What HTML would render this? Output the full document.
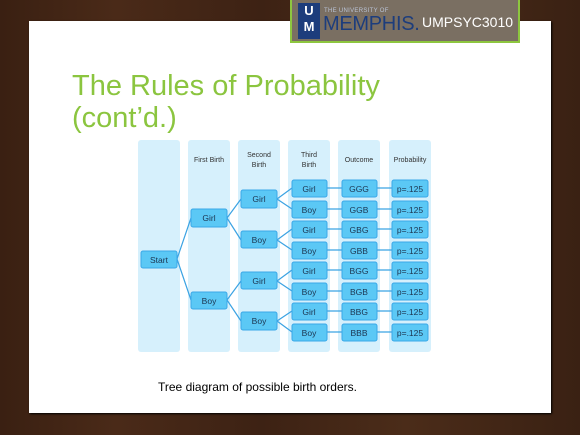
<!DOCTYPE html>
<html><head><meta charset="utf-8"><style>
html,body{margin:0;padding:0}
body{width:580px;height:435px;position:relative;overflow:hidden;background:linear-gradient(90deg,#3a2012 0%,#4a2a18 20%,#3d2214 45%,#4b2c19 70%,#3a2113 100%);font-family:"Liberation Sans",sans-serif}
.slide{position:absolute;left:29px;top:21px;width:522px;height:392px;background:#fff;box-shadow:1px 1px 2px #000}
.banner{position:absolute;left:290px;top:0;width:230px;height:43px;background:#7a6f62;border:2px solid #8dc63f;border-top:none;box-sizing:border-box}
.logo{position:absolute;left:6px;top:3px;width:22px;height:36px;background:#1d3d7c;color:#fff;font-size:13px;font-weight:bold;text-align:center;line-height:16px}
.uni{position:absolute;left:32px;top:8px;font-size:6px;color:#b9c3d6;letter-spacing:.3px}
.mem{position:absolute;left:31px;top:13px;font-size:20px;color:#1d3d7c;letter-spacing:-.3px}
.code{position:absolute;left:130px;top:14px;font-size:14px;color:#fff}
.title{position:absolute;left:72px;top:70px;font-size:29px;line-height:32px;color:#8bc53f}
.cap{position:absolute;left:158px;top:380px;font-size:12px;color:#000}
</style></head><body>
<div class="slide"></div>
<div class="banner"><div class="logo">U<br>M</div><div class="uni">THE UNIVERSITY OF</div><div class="mem">MEMPHIS.</div><div class="code">UMPSYC3010</div></div>
<div class="title">The Rules of Probability<br>(cont’d.)</div>
<svg style="position:absolute;left:0;top:0" width="580" height="435" font-family="Liberation Sans, sans-serif">
<g fill="#d6f0fc">
<rect x="138" y="140" width="42" height="212" rx="3"/><rect x="188" y="140" width="42" height="212" rx="3"/><rect x="238" y="140" width="42" height="212" rx="3"/><rect x="288" y="140" width="42" height="212" rx="3"/><rect x="338" y="140" width="42" height="212" rx="3"/><rect x="389" y="140" width="42" height="212" rx="3"/>
</g>
<g font-size="7" fill="#333" text-anchor="middle">
<text x="209" y="162">First Birth</text>
<text x="259" y="157">Second</text><text x="259" y="167">Birth</text>
<text x="309" y="157">Third</text><text x="309" y="167">Birth</text>
<text x="359" y="162">Outcome</text>
<text x="410" y="162">Probability</text>
</g>
<g stroke="#3ba3e3" stroke-width="1.2" fill="none">
<path d="M177 259L191 218M177 259L191 300"/>
<path d="M227 218L241 199M227 218L241 240M227 300L241 281M227 300L241 321"/>
<path d="M277 199L292 188M277 199L292 209M277 240L292 229M277 240L292 250M277 281L292 270M277 281L292 291M277 321L292 311M277 321L292 332"/>
<path d="M327 188H342M327 209H342M327 229H342M327 250H342M327 270H342M327 291H342M327 311H342M327 332H342"/>
<path d="M377 188H392M377 209H392M377 229H392M377 250H392M377 270H392M377 291H392M377 311H392M377 332H392"/>
</g>
<g fill="#5bc8f5" stroke="#3aa8e8" stroke-width="1">
<rect x="141" y="251" width="36" height="17" rx="2"/>
<rect x="191" y="209" width="36" height="18" rx="2"/><rect x="191" y="292" width="36" height="17" rx="2"/>
<rect x="241" y="190" width="36" height="18" rx="2"/><rect x="241" y="231" width="36" height="17" rx="2"/><rect x="241" y="272" width="36" height="17" rx="2"/><rect x="241" y="312" width="36" height="18" rx="2"/>
</g>
<g fill="#5bc8f5" stroke="#3aa8e8" stroke-width="1">
<rect x="292" y="180" width="35" height="17" rx="2"/><rect x="292" y="201" width="35" height="17" rx="2"/><rect x="292" y="221" width="35" height="17" rx="2"/><rect x="292" y="242" width="35" height="17" rx="2"/><rect x="292" y="262" width="35" height="17" rx="2"/><rect x="292" y="283" width="35" height="17" rx="2"/><rect x="292" y="303" width="35" height="17" rx="2"/><rect x="292" y="324" width="35" height="17" rx="2"/>
<rect x="342" y="180" width="35" height="17" rx="2"/><rect x="342" y="201" width="35" height="17" rx="2"/><rect x="342" y="221" width="35" height="17" rx="2"/><rect x="342" y="242" width="35" height="17" rx="2"/><rect x="342" y="262" width="35" height="17" rx="2"/><rect x="342" y="283" width="35" height="17" rx="2"/><rect x="342" y="303" width="35" height="17" rx="2"/><rect x="342" y="324" width="35" height="17" rx="2"/>
<rect x="392" y="180" width="36" height="17" rx="2"/><rect x="392" y="201" width="36" height="17" rx="2"/><rect x="392" y="221" width="36" height="17" rx="2"/><rect x="392" y="242" width="36" height="17" rx="2"/><rect x="392" y="262" width="36" height="17" rx="2"/><rect x="392" y="283" width="36" height="17" rx="2"/><rect x="392" y="303" width="36" height="17" rx="2"/><rect x="392" y="324" width="36" height="17" rx="2"/>
</g>
<g font-size="8.5" fill="#1c3550" text-anchor="middle">
<text x="159" y="263">Start</text>
<text x="209" y="221">Girl</text><text x="209" y="304">Boy</text>
<text x="259" y="202">Girl</text><text x="259" y="243">Boy</text><text x="259" y="284">Girl</text><text x="259" y="324">Boy</text>
<text x="309" y="192">Girl</text><text x="309" y="213">Boy</text><text x="309" y="233">Girl</text><text x="309" y="254">Boy</text><text x="309" y="274">Girl</text><text x="309" y="295">Boy</text><text x="309" y="315">Girl</text><text x="309" y="336">Boy</text>
<text x="359" y="192">GGG</text><text x="359" y="213">GGB</text><text x="359" y="233">GBG</text><text x="359" y="254">GBB</text><text x="359" y="274">BGG</text><text x="359" y="295">BGB</text><text x="359" y="315">BBG</text><text x="359" y="336">BBB</text>
<text x="410" y="192">p=.125</text><text x="410" y="213">p=.125</text><text x="410" y="233">p=.125</text><text x="410" y="254">p=.125</text><text x="410" y="274">p=.125</text><text x="410" y="295">p=.125</text><text x="410" y="315">p=.125</text><text x="410" y="336">p=.125</text>
</g>
</svg>
<div class="cap">Tree diagram of possible birth orders.</div>
</body></html>
